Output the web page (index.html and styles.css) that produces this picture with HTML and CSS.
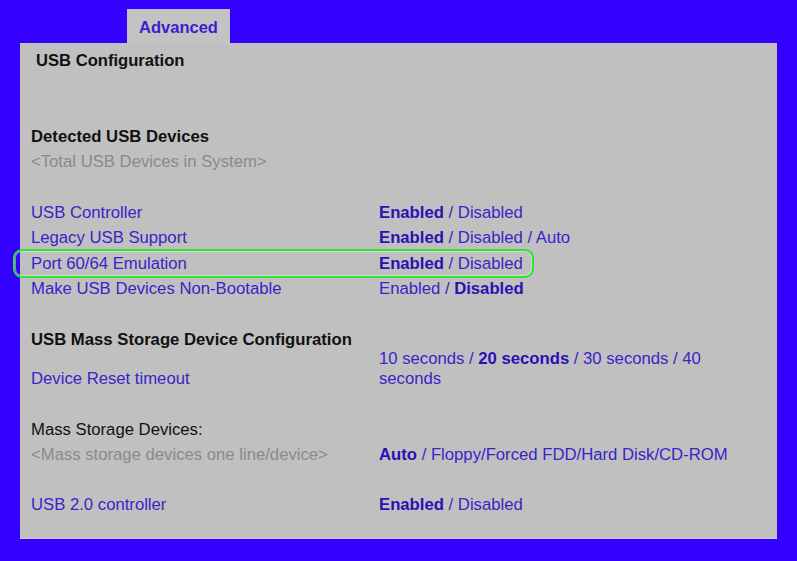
FILE: index.html
```html
<!DOCTYPE html>
<html lang="en">
<head>
    <meta charset="UTF-8">
    <title>USB Configuration</title>
    <link rel="stylesheet" href="styles.css">
</head>
<body>

    <div class="tabs">
        <div class="tab">Advanced</div>
    </div>

    <div class="panel">
        <h2 class="title">USB Configuration</h2>

        <div class="section first">
            <div class="heading">Detected USB Devices</div>
            <div class="info">&lt;Total USB Devices in System&gt;</div>
        </div>

        <div class="section options">
            <div class="row">
                <span class="label">USB Controller</span>
                <span class="value"><b>Enabled</b> / Disabled</span>
            </div>
            <div class="row">
                <span class="label">Legacy USB Support</span>
                <span class="value"><b>Enabled</b> / Disabled / Auto</span>
            </div>
            <div class="row highlight">
                <span class="label">Port 60/64 Emulation</span>
                <span class="value"><b>Enabled</b> / Disabled</span>
            </div>
            <div class="row">
                <span class="label">Make USB Devices Non-Bootable</span>
                <span class="value">Enabled / <b>Disabled</b></span>
            </div>
        </div>

        <div class="section mass">
            <div class="heading tight">USB Mass Storage Device Configuration</div>
            <div class="row wrap">
                <span class="label">Device Reset timeout</span>
                <span class="value">10 seconds / <b>20 seconds</b> / 30 seconds / 40<br>seconds</span>
            </div>
        </div>

        <div class="section devices">
            <div class="plain">Mass Storage Devices:</div>
            <div class="row">
                <span class="label info">&lt;Mass storage devices one line/device&gt;</span>
                <span class="value"><b>Auto</b> / Floppy/Forced FDD/Hard Disk/CD-ROM</span>
            </div>
        </div>

        <div class="section last">
            <div class="row">
                <span class="label">USB 2.0 controller</span>
                <span class="value"><b>Enabled</b> / Disabled</span>
            </div>
        </div>
    </div>

</body>
</html>
```

FILE: styles.css
```css
body {
    font-family: "Liberation Sans", Arial, sans-serif;
    font-size: 16.7px;
    background-color: #3300ff;
    margin: 0;
    height: 561px;
    overflow: hidden;
}
.tabs {
    padding: 9px 0 0 127px;
    display: flex;
}
.tab {
    width: 103px;
    height: 34px;
    line-height: 36px;
    text-align: center;
    background-color: #c3c3c3;
    color: #3a1fd0;
    font-weight: bold;
    font-size: 16.5px;
}
.panel {
    margin-left: 20px;
    width: 757px;
    box-sizing: border-box;
    background-color: #c0c0c0;
    padding: 8px 0 21px 11px;
    border-bottom: 1px solid #cfc6f4;
    color: #3a24c8;
}
.title {
    margin: 0 0 0 5px;
    font-size: 16.6px;
    line-height: 20px;
    color: #111;
}
.section.first {
    margin-top: 53px;
}
.heading {
    font-weight: bold;
    color: #111;
    line-height: 25px;
}
.heading.tight {
    line-height: 20px;
}
.plain {
    color: #111;
    line-height: 25px;
}
.info {
    color: #8a8a8a;
    line-height: 25px;
}
.options {
    margin-top: 26px;
}
.mass {
    margin-top: 28px;
}
.devices {
    margin-top: 28px;
}
.last {
    margin-top: 25px;
}
.row {
    display: grid;
    grid-template-columns: 348px 350px;
    line-height: 25.4px;
    position: relative;
}
.row b {
    color: #2b10b4;
}
.row.wrap {
    line-height: 20px;
    align-items: end;
    margin-top: -1px;
}
.highlight::after {
    content: "";
    position: absolute;
    left: -18px;
    top: -2px;
    width: 517px;
    height: 25px;
    border: 2px solid #33e033;
    border-radius: 9px;
    box-shadow: inset 0 0 0 1px rgba(210, 255, 210, 0.5);
}
```
